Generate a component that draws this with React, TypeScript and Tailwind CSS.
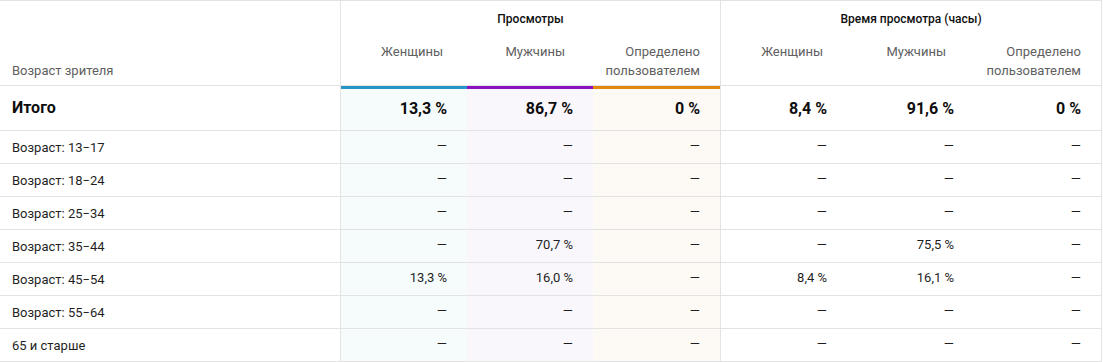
const groups = ["Просмотры", "Время просмотра (часы)"];

const totals = ["13,3 %", "86,7 %", "0 %", "8,4 %", "91,6 %", "0 %"];

const rows: { label: string; values: string[] }[] = [
  { label: "Возраст: 13−17", values: ["—", "—", "—", "—", "—", "—"] },
  { label: "Возраст: 18−24", values: ["—", "—", "—", "—", "—", "—"] },
  { label: "Возраст: 25−34", values: ["—", "—", "—", "—", "—", "—"] },
  { label: "Возраст: 35−44", values: ["—", "70,7 %", "—", "—", "75,5 %", "—"] },
  { label: "Возраст: 45−54", values: ["13,3 %", "16,0 %", "—", "8,4 %", "16,1 %", "—"] },
  { label: "Возраст: 55−64", values: ["—", "—", "—", "—", "—", "—"] },
  { label: "65 и старше", values: ["—", "—", "—", "—", "—", "—"] },
];

// views columns get a tint, the last one of each group closes it with a line
const cellTint = [
  "bg-[#f6fbfc]",
  "bg-[#f9f7fc]",
  "bg-[#fdfaf6] border-r border-[#e3e3e3]",
  "",
  "",
  "",
];

const bars = [
  "shadow-[inset_0_3px_0_#2596c5]",
  "shadow-[inset_0_3px_0_#8a10c2]",
  "shadow-[inset_0_3px_0_#e0880f]",
  "",
  "",
  "",
];

const subPad = ["pr-[24px]", "pr-[28px]", "pr-5"];

export default function App() {
  return (
    <div className="bg-white font-['Roboto',sans-serif]">
      <table className="w-[1102px] table-fixed border-separate border-spacing-0 border-t border-r border-[#e3e3e3]">
        <colgroup>
          <col className="w-[341px]" />
          <col className="w-[126px]" />
          <col className="w-[126px]" />
          <col className="w-[128px]" />
          <col className="w-[126px]" />
          <col className="w-[127px]" />
          <col className="w-[127px]" />
        </colgroup>
        <thead>
          <tr>
            <th
              rowSpan={2}
              className="border-r border-b border-[#e3e3e3] pb-[5px] pl-3 text-left align-bottom text-[13px] leading-[19px] font-normal text-[#606060]"
            >
              Возраст зрителя
            </th>
            {groups.map((g, i) => (
              <th
                key={g}
                colSpan={3}
                className={
                  "pt-[10px] pb-[7px] text-center text-xs leading-4 font-medium text-[#0f0f0f] " +
                  (i === 0 ? "border-r border-[#e3e3e3]" : "")
                }
              >
                {g}
              </th>
            ))}
          </tr>
          <tr>
            {[0, 1].flatMap((gi) =>
              ["Женщины", "Мужчины", "Определено пользователем"].map((s, si) => (
                <th
                  key={gi + s}
                  className={
                    "border-b border-[#e3e3e3] pt-2 pb-[5px] text-right align-top text-[13px] leading-[19px] font-normal text-[#606060] " +
                    subPad[si] +
                    (gi === 0 && si === 2 ? " border-r" : "")
                  }
                >
                  {s}
                </th>
              ))
            )}
          </tr>
        </thead>
        <tbody>
          <tr>
            <td className="h-[45px] border-r border-b border-[#e3e3e3] pl-3 text-base font-bold text-[#0d0d0d]">
              Итого
            </td>
            {totals.map((v, i) => (
              <td
                key={i}
                className={`border-b border-[#e3e3e3] pr-5 pt-[1px] text-right text-base font-bold text-[#0d0d0d] ${cellTint[i]} ${bars[i]}`}
              >
                {v}
              </td>
            ))}
          </tr>
          {rows.map((r) => (
            <tr key={r.label}>
              <td className="h-[33px] border-r border-b border-[#e3e3e3] pl-3 pt-[2px] text-[13px] text-[#1f1f1f]">
                {r.label}
              </td>
              {r.values.map((v, i) => (
                <td
                  key={i}
                  className={`border-b border-[#e3e3e3] pr-5 pb-[2px] text-right text-[13px] text-[#1f1f1f] ${cellTint[i]}`}
                >
                  {v}
                </td>
              ))}
            </tr>
          ))}
        </tbody>
      </table>
    </div>
  );
}
